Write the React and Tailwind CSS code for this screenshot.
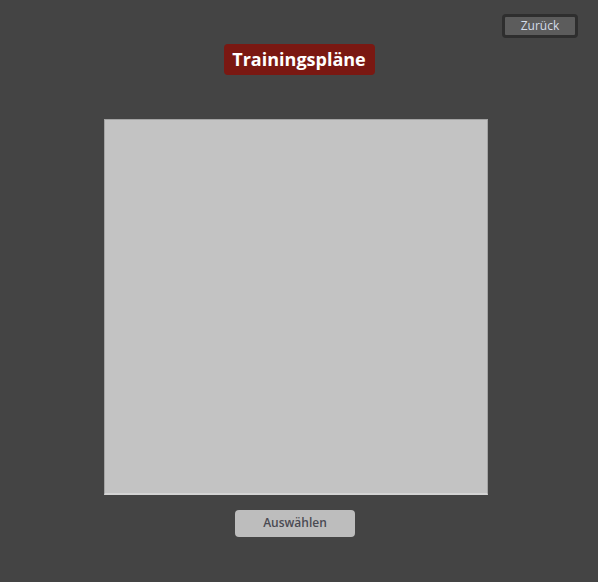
export default function App() {
  return (
    <div
      className="w-[598px] h-[582px] bg-[#444444] flex flex-col"
      style={{ fontFamily: '"Open Sans", "DejaVu Sans", sans-serif' }}
    >
      <div className="flex justify-end pt-[14px] pr-[20px]">
        <button className="w-[76px] h-[24px] rounded-[4px] border-[3px] border-[#2e2e2e] bg-[#5c5c5c] text-[12px] leading-none text-[#d4dcea]">
          Zurück
        </button>
      </div>
      <div className="flex justify-center mt-[6px]">
        <div className="w-[151px] h-[31px] rounded-[4px] bg-[#7a1812] flex items-center justify-center text-white font-bold text-[18px]">
          Trainingspläne
        </div>
      </div>
      <div className="ml-[104px] mt-[44px] w-[384px] h-[376px] bg-[#c3c3c3] border border-[#a3a3a3] border-b-[2px] border-b-[#d4d4d4]" />
      <div className="ml-[235px] mt-[14px]">
        <button className="w-[120px] h-[27px] rounded-[4px] bg-[#bdbdbd] text-[12px] font-semibold text-[#4a4a52]">
          Auswählen
        </button>
      </div>
    </div>
  );
}
